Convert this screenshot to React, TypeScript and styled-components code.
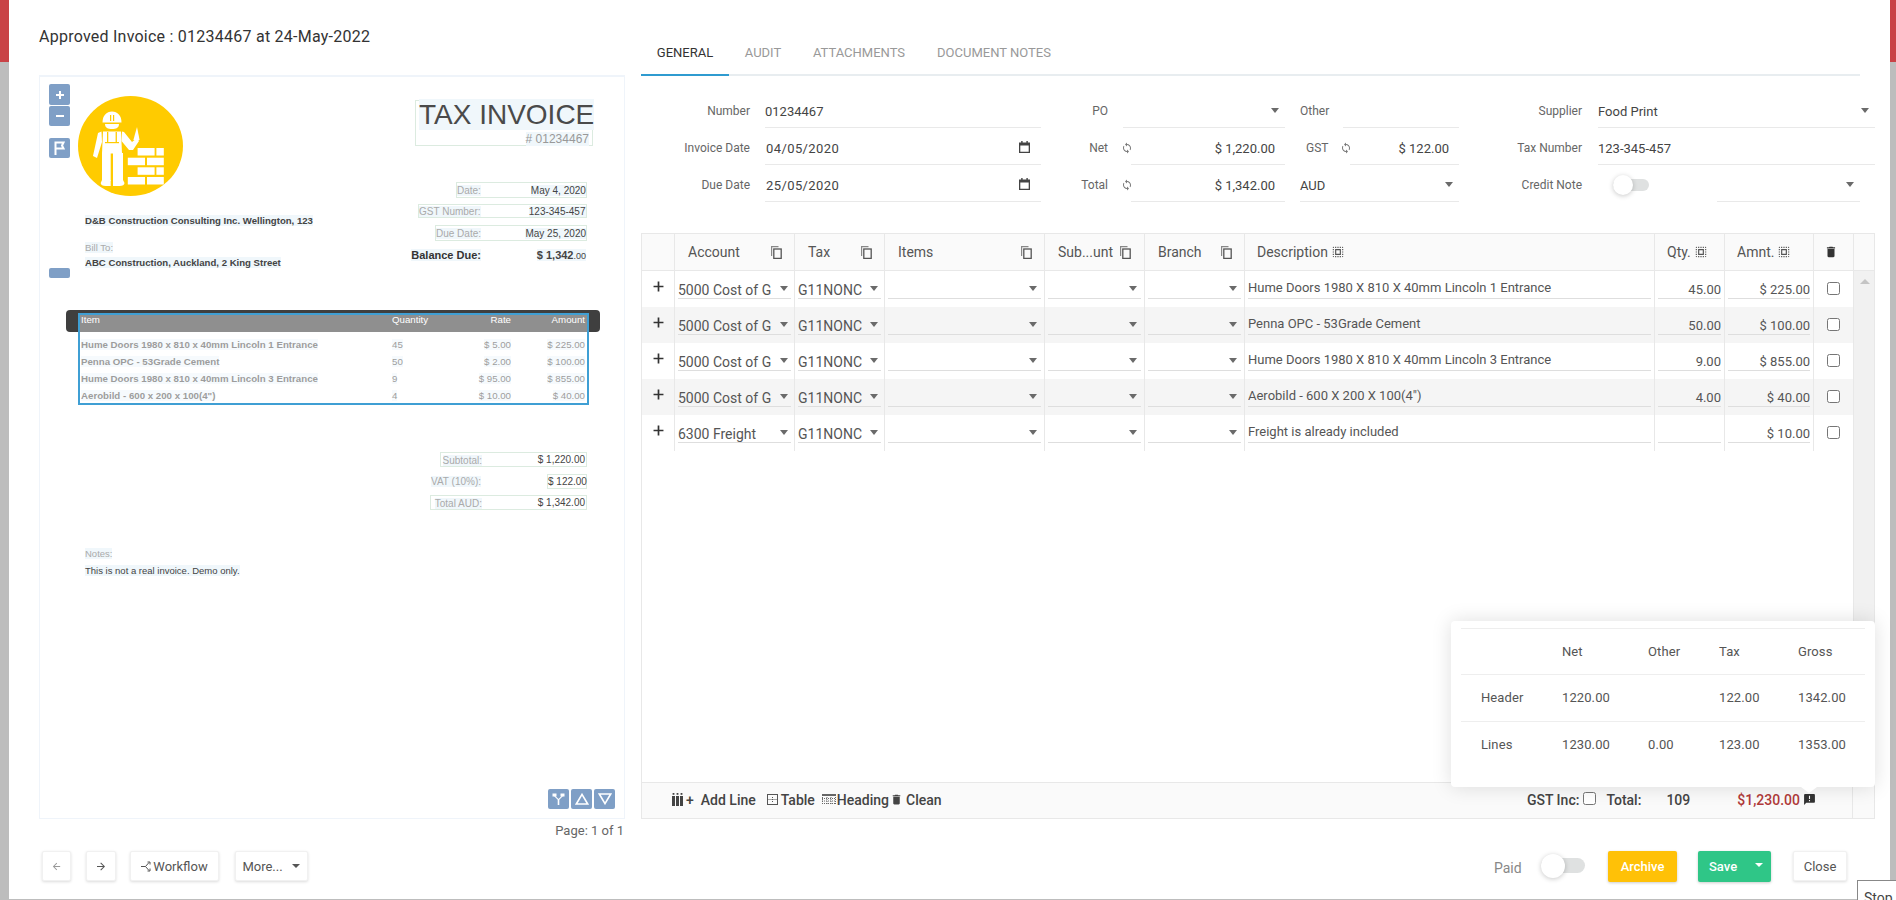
import { FC, ReactNode } from 'react'
import styled, { createGlobalStyle } from 'styled-components'

const GlobalStyle = createGlobalStyle`
	html, body {
		margin: 0;
		padding: 0;
		overflow: hidden;
	}
	body {
		font-family: Roboto, 'Liberation Sans', sans-serif;
		color: #555;
	}
	* {
		box-sizing: border-box;
	}
`

const PDF_FONT = `'Liberation Sans', Arial, sans-serif`
const COLUMNS = '33px 120px 90px 160px 100px 100px 410px 70px 89px 40px 20px'

const ICONS = {
	add: 'M19 13.2h-5.8V19h-2.4v-5.8H5v-2.4h5.8V5h2.4v5.8H19z',
	boldAdd: 'M20 14h-6v6h-4v-6H4v-4h6V4h4v6h6z',
	boldRemove: 'M20 14H4v-4h16z',
	back: 'M20 11H7.83l5.59-5.59L12 4l-8 8 8 8 1.41-1.41L7.83 13H20v-2z',
	forward: 'M12 4l-1.41 1.41L16.17 11H4v2h12.17l-5.58 5.59L12 20l8-8z',
	trash: 'M6 19c0 1.1.9 2 2 2h8c1.1 0 2-.9 2-2V7H6v12zM19 4h-3.5l-1-1h-5l-1 1H5v2h14V4z',
	note: 'M20 2H4c-1.1 0-1.99.9-1.99 2L2 22l4-4h14c1.1 0 2-.9 2-2V4c0-1.1-.9-2-2-2zm-7 9h-2V5h2v6zm0 4h-2v-2h2v2z',
	sync: 'M12 4V1L8 5l4 4V6c3.31 0 6 2.69 6 6 0 1.01-.25 1.97-.7 2.8l1.46 1.46C19.54 15.03 20 13.57 20 12c0-4.42-3.58-8-8-8zm0 14c-3.31 0-6-2.69-6-6 0-1.01.25-1.97.7-2.8L5.24 7.74C4.46 8.97 4 10.43 4 12c0 4.42 3.58 8 8 8v3l4-4-4-4v3z',
	selectAll:
		'M3 5h2V3c-1.1 0-2 .9-2 2zm0 8h2v-2H3v2zm4 8h2v-2H7v2zM3 9h2V7H3v2zm10-6h-2v2h2V3zm6 0v2h2c0-1.1-.9-2-2-2zM5 21v-2H3c0 1.1.9 2 2 2zm-2-4h2v-2H3v2zM9 3H7v2h2V3zm2 18h2v-2h-2v2zm8-8h2v-2h-2v2zm0 8c1.1 0 2-.9 2-2h-2v2zm0-12h2V7h-2v2zm0 8h2v-2h-2v2zm-4 4h2v-2h-2v2zm0-16h2V3h-2v2zM7 17h10V7H7v10zm2-8h6v6H9V9z',
}

const Icon: FC<{ name: keyof typeof ICONS; size: number; color?: string; className?: string }> = ({
	name,
	size,
	color,
	className,
}) => (
	<svg className={className} width={size} height={size} viewBox='0 0 24 24' fill={color ?? 'currentColor'}>
		<path d={ICONS[name]} />
	</svg>
)

const Page = styled.div`
	position: relative;
	width: 1896px;
	height: 900px;
	overflow: hidden;
	background: linear-gradient(#c94246 62px, #bdbdbd 62px);
`

const Modal = styled.div`
	display: flex;
	width: 1881px;
	height: 899px;
	margin-left: 9px;
	padding-left: 30px;
	background: #fff;
`

const LeftColumn = styled.div`
	width: 586px;
	margin-right: 16px;
	display: flex;
	flex-direction: column;
`

const RightColumn = styled.div`
	width: 1234px;
	padding-top: 32px;
	display: flex;
	flex-direction: column;
`

const Title = styled.h1`
	margin: 0;
	padding-top: 27px;
	height: 75px;
	font-size: 16px;
	line-height: 20px;
	font-weight: 400;
	color: #333;
	letter-spacing: 0.24px;
`

/* pdf viewer */
const Viewer = styled.div`
	position: relative;
	flex: none;
	height: 744px;
	border: 1px solid #eff4fa;
	border-top-width: 2px;
	font-family: ${PDF_FONT};
`

const ToolRail = styled.div`
	position: absolute;
	left: 9px;
	top: 7px;
	display: flex;
	flex-direction: column;
`

const ToolButton = styled.div<{ $h?: number; $mt?: number }>`
	width: 21px;
	height: ${({ $h }) => $h ?? 20}px;
	margin-top: ${({ $mt }) => $mt ?? 0}px;
	border-radius: 2px;
	background: #7f9fc6;
	color: #fff;
	display: flex;
	align-items: center;
	justify-content: center;
`

const PageTools = styled.div`
	position: absolute;
	right: 9px;
	bottom: 9px;
	display: flex;
	gap: 2px;
`

const Doc = styled.div`
	padding: 19px 37px 0 38px;
	font-size: 10px;
	color: #444;
`

const DocHead = styled.div`
	display: flex;
	justify-content: space-between;
	height: 195px;
`

const LogoMark = styled.svg`
	display: block;
	width: 105px;
	height: 100px;
	margin-bottom: 18px;
`

const AddressLine = styled.div<{ $muted?: boolean; $mt?: number }>`
	margin: ${({ $mt }) => $mt ?? 0}px 0 0 7px;
	line-height: 13px;
	font-size: 9.6px;
	font-weight: ${({ $muted }) => ($muted ? 400 : 700)};
	color: ${({ $muted }) => ($muted ? '#aaa' : '#444')};
`

const TextRun = styled.span`
	background: #f0f7fb;
`

const Meta = styled.div`
	display: flex;
	flex-direction: column;
	align-items: flex-end;
	padding-top: 4px;
`

const TaxBox = styled.div`
	width: 178px;
	height: 46px;
	border: 1px solid #dcebe0;
	padding: 0 3px;
	text-align: right;
	margin-right: -6px;
`

const TaxTitle = styled.div`
	font-size: 28px;
	line-height: 28px;
	text-align: left;
	white-space: nowrap;
	color: #4a4a4a;
`

const TaxNumber = styled.div`
	font-size: 12px;
	line-height: 14px;
	margin-top: 3px;
	color: #999;
`

const MetaRow = styled.div<{ $w: number; $h: number; $mt: number; $plain?: boolean }>`
	width: ${({ $w }) => $w}px;
	height: ${({ $h }) => $h}px;
	margin-top: ${({ $mt }) => $mt}px;
	display: grid;
	grid-template-columns: 1fr 105px;
	align-items: center;
	border: ${({ $plain }) => ($plain ? '0' : '1px solid #dcebe0')};
	padding-right: 1px;
`

const MetaLabel = styled.div<{ $strong?: boolean }>`
	text-align: right;
	font-size: ${({ $strong }) => ($strong ? 11 : 10)}px;
	font-weight: ${({ $strong }) => ($strong ? 700 : 400)};
	color: ${({ $strong }) => ($strong ? '#333' : '#aaa')};
	white-space: nowrap;
`

const MetaValue = styled.div<{ $strong?: boolean }>`
	text-align: right;
	font-size: ${({ $strong }) => ($strong ? 11 : 10)}px;
	font-weight: ${({ $strong }) => ($strong ? 700 : 400)};
	color: #444;
	white-space: nowrap;
	small {
		font-size: 9px;
		font-weight: 400;
	}
`

const LinesTable = styled.div`
	position: relative;
	width: 534px;
	margin: 19px 0 0 -12px;
	height: 95px;
`

const LinesHeader = styled.div`
	height: 22px;
	padding-top: 3px;
	border-radius: 4px;
	background: #3f3f3f;
	color: #fff;
`

const LineGrid = styled.div<{ $head?: boolean }>`
	display: grid;
	grid-template-columns: 311px 60px 59px 74px;
	padding-left: 15px;
	height: ${({ $head }) => ($head ? 14 : 17)}px;
	line-height: ${({ $head }) => ($head ? 14 : 17)}px;
	font-size: 9.7px;
`

const LineCell = styled.div<{ $right?: boolean; $bold?: boolean }>`
	text-align: ${({ $right }) => ($right ? 'right' : 'left')};
	font-weight: ${({ $bold }) => ($bold ? 700 : 400)};
	white-space: nowrap;
`

const LineRows = styled.div`
	padding-top: 4px;
	color: #555;
`

const SelectionBox = styled.div`
	position: absolute;
	left: 11.5px;
	top: 3px;
	width: 511px;
	height: 92px;
	border: 2px solid #3f9fd4;
	background: rgba(255, 255, 255, 0.42);
`

const TotalsBlock = styled.div`
	margin-top: 47px;
`

const TotalRow = styled.div<{ $left: number; $mt: number; $short?: boolean }>`
	width: ${({ $left }) => 587 - $left}px;
	margin: ${({ $mt }) => $mt}px 0 0 ${({ $left }) => $left - 78}px;
	height: 15px;
	display: grid;
	grid-template-columns: ${({ $left }) => 481 - $left}px 1fr;
	align-items: center;
	font-size: 10px;
	border: ${({ $short }) => ($short ? '0' : '1px solid #dcebe0')};
	padding-right: 1px;
`

const AmountBox = styled.div<{ $boxed?: boolean }>`
	justify-self: end;
	width: ${({ $boxed }) => ($boxed ? '40px' : 'auto')};
	height: 15px;
	line-height: 13px;
	text-align: right;
	white-space: nowrap;
	color: #444;
	border: ${({ $boxed }) => ($boxed ? '1px solid #dcebe0' : '0')};
	margin-right: ${({ $boxed }) => ($boxed ? '-1px' : '0')};
`

const Notes = styled.div`
	margin: 35px 0 0 7px;
	font-size: 9.5px;
	line-height: 17px;
`

const NotesLabel = styled.div`
	color: #aaa;
`

const PageLabel = styled.div`
	height: 32px;
	padding: 3px 1px 0 0;
	text-align: right;
	font-size: 13px;
	line-height: 18px;
	color: #666;
`

const Actions = styled.div`
	display: flex;
	align-items: flex-start;
`

const Button = styled.div<{ $w?: number; $ml?: number; $muted?: boolean }>`
	width: ${({ $w }) => ($w ? `${$w}px` : 'auto')};
	height: 30px;
	margin-left: ${({ $ml }) => $ml ?? 0}px;
	padding: 0 8px;
	display: flex;
	align-items: center;
	justify-content: center;
	gap: 2px;
	border: 1px solid #f1f1f1;
	border-radius: 2px;
	background: #fff;
	box-shadow: 0 1px 3px rgba(0, 0, 0, 0.14);
	font-size: 13px;
	color: ${({ $muted }) => ($muted ? '#999' : '#555')};
	white-space: nowrap;
`

const ColorButton = styled.div<{ $bg: string; $w: number; $ml: number }>`
	width: ${({ $w }) => $w}px;
	height: 31px;
	margin-left: ${({ $ml }) => $ml}px;
	border-radius: 2px;
	background: ${({ $bg }) => $bg};
	box-shadow: 0 1px 3px rgba(0, 0, 0, 0.2);
	color: #fff;
	font-size: 13px;
	font-weight: 500;
	display: flex;
	align-items: center;
	justify-content: center;
`

const SaveLabel = styled.span`
	flex: 1;
	padding-left: 11px;
`

const SaveCaret = styled.span`
	width: 0;
	height: 0;
	margin: 0 8px 3px 0;
	border-left: 4px solid transparent;
	border-right: 4px solid transparent;
	border-top: 4px solid #fff;
`

const Caret = styled.span`
	width: 0;
	height: 0;
	border-left: 4px solid transparent;
	border-right: 4px solid transparent;
	border-top: 4px solid #555;
	margin-left: 7px;
`

/* tabs */
const Tabs = styled.div`
	display: flex;
	flex: none;
	height: 44px;
	width: 1219px;
	border-bottom: 2px solid #e8edf0;
`

const Tab = styled.div<{ $active?: boolean; $w: number }>`
	width: ${({ $w }) => $w}px;
	height: 44px;
	padding-top: 13px;
	text-align: center;
	font-size: 13px;
	line-height: 16px;
	text-transform: uppercase;
	color: ${({ $active }) => ($active ? '#333' : '#999')};
	border-bottom: 2px solid ${({ $active }) => ($active ? '#2f9bd0' : 'transparent')};
`

/* header form */
const Form = styled.div`
	display: grid;
	flex: none;
	grid-template-columns: 400px 244px 174px 416px;
	grid-auto-rows: 37px;
	margin-top: 15px;
	height: 111px;
`

const Field = styled.div<{ $pl?: number }>`
	display: flex;
	padding-left: ${({ $pl }) => $pl ?? 0}px;
	font-size: 13px;
`

const FieldLabel = styled.div<{ $w?: number; $left?: boolean }>`
	width: ${({ $w }) => ($w ? `${$w}px` : 'auto')};
	padding-top: 12px;
	line-height: 16px;
	font-size: 12px;
	text-align: ${({ $left }) => ($left ? 'left' : 'right')};
	color: #666;
	white-space: nowrap;
`

const Input = styled.div<{ $ml: number; $w: number; $right?: boolean; $pr?: number }>`
	position: relative;
	width: ${({ $w }) => $w}px;
	height: 37px;
	margin-left: ${({ $ml }) => $ml}px;
	padding: 13px ${({ $pr }) => $pr ?? 0}px 0 0;
	line-height: 16px;
	font-size: 13px;
	color: #444;
	text-align: ${({ $right }) => ($right ? 'right' : 'left')};
	border-bottom: 1px solid #e9e9e9;
	display: flex;
	justify-content: ${({ $right }) => ($right ? 'flex-end' : 'space-between')};
`

const DateText = styled.span`
	padding-left: 1px;
	letter-spacing: 0.4px;
`

const Arrow = styled.span<{ $top?: number; $right?: number }>`
	position: absolute;
	top: ${({ $top }) => $top ?? 17}px;
	right: ${({ $right }) => $right ?? 6}px;
	width: 0;
	height: 0;
	border-left: 4px solid transparent;
	border-right: 4px solid transparent;
	border-top: 5px solid #6a6a6a;
`

const CalendarIcon = styled.svg`
	position: absolute;
	right: 11px;
	top: 13px;
	width: 11px;
	height: 12px;
`

const SyncIcon = styled(Icon)`
	position: absolute;
	left: -10px;
	top: 14px;
	color: #777;
`

const Switch = styled.div<{ $track: number; $height: number; $thumb: number }>`
	position: relative;
	width: ${({ $track }) => $track}px;
	height: ${({ $height }) => $height}px;
	border-radius: ${({ $height }) => $height / 2}px;
	background: #dfe1e1;
	&::before {
		content: '';
		position: absolute;
		left: 0;
		top: ${({ $height, $thumb }) => ($height - $thumb) / 2}px;
		width: ${({ $thumb }) => $thumb}px;
		height: ${({ $thumb }) => $thumb}px;
		border-radius: 50%;
		background: #fff;
		box-shadow: 0 1px 5px rgba(0, 0, 0, 0.22);
	}
`

const CreditSwitch = styled.div`
	margin: 14px 0 0 31px;
`

/* lines grid */
const Shell = styled.div`
	position: relative;
	display: flex;
	flex: none;
	flex-direction: column;
	width: 1234px;
	height: 586px;
	margin-top: 31px;
	border: 1px solid #e8e8e8;
`

const GridRow = styled.div<{ $shade?: boolean; $h: number }>`
	display: grid;
	grid-template-columns: ${COLUMNS};
	height: ${({ $h }) => $h}px;
	background: ${({ $shade }) => ($shade ? '#f5f5f5' : 'transparent')};
`

const HeadRow = styled(GridRow)`
	background: #fafafa;
	border-bottom: 1px solid #e8e8e8;
`

const HeadCell = styled.div<{ $pl?: number; $pr?: number; $tight?: boolean }>`
	display: flex;
	align-items: center;
	justify-content: ${({ $tight }) => ($tight ? 'flex-start' : 'space-between')};
	gap: 3px;
	padding: 0 ${({ $pr }) => $pr ?? 12}px 0 ${({ $pl }) => $pl ?? 13}px;
	border-right: 1px solid #e8e8e8;
	font-size: 14px;
	color: #555;
	white-space: nowrap;
`

const ScrollHead = styled.div``

const Body = styled.div`
	position: relative;
	flex: 1;
	min-height: 0;
`

const ScrollTrack = styled.div`
	position: absolute;
	top: 0;
	right: 0;
	bottom: 0;
	width: 21px;
	background: #f1f1f1;
	border-left: 1px solid #e8e8e8;
	&::before {
		content: '';
		position: absolute;
		left: 6px;
		top: 8px;
		border-left: 5px solid transparent;
		border-right: 5px solid transparent;
		border-bottom: 5px solid #c4c4c4;
	}
`

const Cell = styled.div<{ $center?: boolean }>`
	position: relative;
	padding: 0 3px;
	border-right: 1px solid #e8e8e8;
	display: ${({ $center }) => ($center ? 'flex' : 'block')};
	justify-content: center;
`

const PlusMark = styled(Icon)`
	margin-top: 7px;
`

const CellField = styled.div<{ $pt: number; $right?: boolean; $large?: boolean }>`
	position: relative;
	height: 28px;
	padding: ${({ $pt }) => $pt}px 0 0 0;
	border-bottom: 1px solid #dedede;
	font-size: ${({ $large }) => ($large ? 14 : 13)}px;
	line-height: 14px;
	color: #555;
	text-align: ${({ $right }) => ($right ? 'right' : 'left')};
	white-space: nowrap;
	overflow: hidden;
`

const CheckBox = styled.span`
	display: block;
	width: 13px;
	height: 13px;
	margin-top: 11px;
	border: 1px solid #767676;
	border-radius: 2.5px;
	background: #fff;
`

const Footer = styled.div`
	display: flex;
	flex: none;
	height: 36px;
	border-top: 1px solid #e8e8e8;
	background: #fafafa;
	font-size: 14px;
	font-weight: 500;
	color: #444;
`

const FooterMain = styled.div`
	flex: 1;
	display: flex;
	align-items: center;
	padding: 0 0 2px 30px;
	white-space: nowrap;
`

const FooterEnd = styled.div`
	width: 22px;
	border-left: 1px solid #e8e8e8;
`

const FooterItem = styled.span<{ $ml?: number; $gap?: number }>`
	display: inline-flex;
	align-items: center;
	gap: ${({ $gap }) => $gap ?? 3}px;
	margin-left: ${({ $ml }) => $ml ?? 0}px;
`

const TotalMoney = styled.span`
	margin-left: 47px;
	color: #b03a3a;
`

const FooterCheck = styled.span`
	width: 13px;
	height: 13px;
	margin: 0 10px 2px 4px;
	border: 1px solid #767676;
	border-radius: 2.5px;
	background: #fff;
`

const Spacer = styled.div`
	flex: 1;
`

/* totals popup */
const Popup = styled.div`
	position: absolute;
	right: -1px;
	bottom: -5px;
	width: 424px;
	height: 166px;
	padding: 7px 10px 0;
	border-radius: 4px;
	background: #fff;
	box-shadow: 0 0 20px rgba(0, 0, 0, 0.13);
	font-size: 13px;
	color: #555;
	&::after {
		content: '';
		position: absolute;
		left: 350px;
		bottom: -6px;
		border-left: 8px solid transparent;
		border-right: 8px solid transparent;
		border-top: 6px solid #fff;
	}
`

const PopupRow = styled.div<{ $h: number; $pb?: number }>`
	display: grid;
	grid-template-columns: 101px 86px 71px 79px 67px;
	align-items: center;
	height: ${({ $h }) => $h}px;
	padding-bottom: ${({ $pb }) => $pb ?? 0}px;
	border-top: 1px solid #eeeeee;
	letter-spacing: 0.1px;
`

const PopupCell = styled.div<{ $first?: boolean }>`
	padding-left: ${({ $first }) => ($first ? 20 : 0)}px;
`

const BottomRight = styled.div`
	display: flex;
	align-items: flex-start;
	margin-top: 32px;
	padding-left: 853px;
`

const PaidLabel = styled.div`
	width: 47px;
	padding-top: 8px;
	font-size: 14px;
	line-height: 18px;
	color: #888;
`

const PaidSwitch = styled.div`
	margin: 7px 0 0 0;
`

const StopTip = styled.div`
	position: absolute;
	right: 0;
	bottom: 0;
	width: 39px;
	height: 20px;
	padding: 9px 0 0 6px;
	border: 1px solid #888;
	border-width: 1px 0 0 1px;
	background: #fff;
	font-size: 14px;
	line-height: 16px;
	color: #444;
	overflow: hidden;
`

const FooterIcon = styled.svg`
	display: block;
`

const rows = [
	{ account: '5000 Cost of G', description: 'Hume Doors 1980 X 810 X 40mm Lincoln 1 Entrance', qty: '45.00', amount: '$ 225.00' },
	{ account: '5000 Cost of G', description: 'Penna OPC - 53Grade Cement', qty: '50.00', amount: '$ 100.00' },
	{ account: '5000 Cost of G', description: 'Hume Doors 1980 X 810 X 40mm Lincoln 3 Entrance', qty: '9.00', amount: '$ 855.00' },
	{ account: '5000 Cost of G', description: 'Aerobild - 600 X 200 X 100(4")', qty: '4.00', amount: '$ 40.00' },
	{ account: '6300 Freight', description: 'Freight is already included', qty: '', amount: '$ 10.00' },
]

const docLines = [
	['Hume Doors 1980 x 810 x 40mm Lincoln 1 Entrance', '45', '$ 5.00', '$ 225.00'],
	['Penna OPC - 53Grade Cement', '50', '$ 2.00', '$ 100.00'],
	['Hume Doors 1980 x 810 x 40mm Lincoln 3 Entrance', '9', '$ 95.00', '$ 855.00'],
	['Aerobild - 600 x 200 x 100(4")', '4', '$ 10.00', '$ 40.00'],
]

const CopyIcon: FC = () => (
	<svg width='11' height='13' viewBox='0 0 11 13' fill='none'>
		<path d='M0.6 10V0.6H7.5' stroke='#888' strokeWidth='1.2' />
		<rect x='2.8' y='3' width='7.4' height='9.4' stroke='#555' strokeWidth='1.3' />
	</svg>
)

const CalendarGlyph: FC = () => (
	<CalendarIcon viewBox='0 0 11 12'>
		<path d='M0 1.5h11V12H0z M1.3 4.5v6.2h8.4V4.5z' fill='#444' fillRule='evenodd' />
		<rect x='2.2' y='0' width='1.4' height='2' fill='#444' />
		<rect x='7.4' y='0' width='1.4' height='2' fill='#444' />
	</CalendarIcon>
)

const WorkerLogo: FC = () => (
	<LogoMark viewBox='0 0 105 100'>
		<ellipse cx='52.5' cy='50' rx='52.5' ry='50' fill='#ffcb00' />
		<g fill='#fff'>
			<path d='M24.5 26.5c0-7 4-11 9.5-11s9.5 4 9.5 11z' />
			<path d='M27 28h14c0 4-3 5-7 5s-7-1-7-5z' />
			<path d='M25 35.5h18l1 22H24z' />
			<path d='M23.5 35.5l-3.5 1.5-5 23 4 2 5-16z' />
			<path d='M44 35.5l2 .5 8 10 5-4 2 3-6 9h-4l-7.500-9z' />
			<path d='M24 57h8.700v28H24z' />
			<path d='M35 57h10v28H35z' />
			<path d='M24 84h8.700v6h-5c-3 0-5-1-5-3z' />
			<path d='M35 84h10l1.500 3c0 2-2 3-5 3H35z' />
			<path d='M59 31l2.600 13h-6.200z' />
			<rect x='59.6' y='52' width='17' height='7.5' />
			<rect x='78.4' y='52' width='7.4' height='7.5' />
			<rect x='49.8' y='61.7' width='17.2' height='7.5' />
			<rect x='69' y='61.7' width='16.8' height='7.5' />
			<rect x='59.6' y='71.3' width='17' height='7.5' />
			<rect x='78.4' y='71.3' width='7.4' height='7.5' />
			<rect x='49.8' y='81' width='17.2' height='7.5' />
			<rect x='69' y='81' width='16.8' height='7.5' />
		</g>
		<g fill='#ffcb00'>
			<rect x='29' y='36' width='1.3' height='10' />
			<rect x='37.6' y='36' width='1.3' height='10' />
			<rect x='27' y='46' width='14' height='1.2' />
			<rect x='32' y='19' width='1.2' height='6' />
			<rect x='35' y='19' width='1.2' height='6' />
		</g>
	</LogoMark>
)

const FlagGlyph: FC = () => (
	<svg width='11' height='14' viewBox='0 0 11 14' fill='none' stroke='#fff' strokeWidth='2'>
		<path d='M1.5 14V1.5h8L8 4.5l1.5 3h-8' />
	</svg>
)

const ForkGlyph: FC = () => (
	<svg width='13' height='13' viewBox='0 0 13 13' fill='#fff'>
		<rect x='0.5' y='0.5' width='4' height='3' />
		<rect x='8.5' y='0.5' width='4' height='3' />
		<path d='M2 3h1.4l3.1 3 3.1-3H11L7.3 6.8V12H5.7V6.8z' />
	</svg>
)

const TriangleGlyph: FC<{ down?: boolean }> = ({ down }) => (
	<svg width='14' height='12' viewBox='0 0 14 12' fill='none' stroke='#fff' strokeWidth='1.6'>
		<path d={down ? 'M1.3 1h11.4L7 10.6z' : 'M1.3 11h11.4L7 1.4z'} />
	</svg>
)

const WorkflowGlyph: FC = () => (
	<svg width='10' height='11' viewBox='0 0 10 11' fill='none' stroke='#555' strokeWidth='1'>
		<path d='M0 5.5h4.5L8 1.5 M4.5 5.5 8 9.5 M6.5 1h2.5v2.5 M6.5 10h2.5V7.5' />
	</svg>
)

const ColumnsGlyph: FC = () => (
	<FooterIcon width='11' height='13' viewBox='0 0 11 13' fill='#444'>
		<rect x='0' y='3' width='3' height='10' />
		<rect x='4' y='3' width='3' height='10' />
		<rect x='8' y='3' width='3' height='10' />
		<rect x='0.6' y='0' width='1.8' height='1.8' />
		<rect x='4.6' y='0' width='1.8' height='1.8' />
		<rect x='8.6' y='0' width='1.8' height='1.8' />
	</FooterIcon>
)

const TableGlyph: FC = () => (
	<FooterIcon width='11' height='11' viewBox='0 0 11 11' fill='none' stroke='#555' strokeWidth='1'>
		<rect x='0.5' y='0.5' width='10' height='10' />
		<path d='M0.5 5.5h10 M5.5 3v5' strokeDasharray='1 1' />
	</FooterIcon>
)

const HeadingGlyph: FC = () => (
	<FooterIcon width='14' height='11' viewBox='0 0 14 11' fill='none' stroke='#666' strokeWidth='1'>
		<path d='M0 1h14' strokeWidth='2' />
		<path d='M0.5 3v8 M13.5 3v8 M0 4.5h14 M0 7h14 M0 9.5h14 M5 3v8 M9 3v8' strokeDasharray='1 1' />
	</FooterIcon>
)

const Select: FC<{ label?: string; ml: number; w: number; right?: number }> = ({ label, ml, w, right }) => (
	<Input $ml={ml} $w={w}>
		<span>{label}</span>
		<Arrow $right={right ?? 6} />
	</Input>
)

const HeadCopy: FC<{ children: ReactNode; pl?: number; pr?: number }> = ({ children, pl, pr }) => (
	<HeadCell $pl={pl} $pr={pr}>
		<span>{children}</span>
		<CopyIcon />
	</HeadCell>
)

const HeadSelect: FC<{ children: ReactNode }> = ({ children }) => (
	<HeadCell $tight $pl={12}>
		<span>{children}</span>
		<Icon name='selectAll' size={14} color='#555' />
	</HeadCell>
)

const CellSelect: FC<{ label?: string; arrow?: number }> = ({ label, arrow }) => (
	<Cell>
		<CellField $pt={12} $large>
			{label || '\u00a0'}
			<Arrow $top={15} $right={arrow ?? 4} />
		</CellField>
	</Cell>
)

const App: FC = () => (
	<Page>
		<GlobalStyle />
		<Modal>
			<LeftColumn>
				<Title>Approved Invoice : 01234467 at 24-May-2022</Title>
				<Viewer>
					<Doc>
						<DocHead>
							<div>
								<WorkerLogo />
								<AddressLine>
									<TextRun>D&amp;B Construction Consulting Inc. Wellington, 123</TextRun>
								</AddressLine>
								<AddressLine $muted $mt={14}>
									<TextRun>Bill To:</TextRun>
								</AddressLine>
								<AddressLine $mt={2}>
									<TextRun>ABC Construction, Auckland, 2 King Street</TextRun>
								</AddressLine>
							</div>
							<Meta>
								<TaxBox>
									<TaxTitle>
										<TextRun>TAX INVOICE</TextRun>
									</TaxTitle>
									<TaxNumber>
										<TextRun># 01234467</TextRun>
									</TaxNumber>
								</TaxBox>
								<MetaRow $w={131} $h={16} $mt={36}>
									<MetaLabel><TextRun>Date:</TextRun></MetaLabel>
									<MetaValue><TextRun>May 4, 2020</TextRun></MetaValue>
								</MetaRow>
								<MetaRow $w={169} $h={14} $mt={6}>
									<MetaLabel><TextRun>GST Number:</TextRun></MetaLabel>
									<MetaValue><TextRun>123-345-457</TextRun></MetaValue>
								</MetaRow>
								<MetaRow $w={152} $h={16} $mt={7}>
									<MetaLabel><TextRun>Due Date:</TextRun></MetaLabel>
									<MetaValue><TextRun>May 25, 2020</TextRun></MetaValue>
								</MetaRow>
								<MetaRow $plain $w={180} $h={14} $mt={7}>
									<MetaLabel $strong><TextRun>Balance Due:</TextRun></MetaLabel>
									<MetaValue $strong><TextRun>$ 1,342<small>.00</small></TextRun></MetaValue>
								</MetaRow>
							</Meta>
						</DocHead>
						<LinesTable>
							<LinesHeader>
								<LineGrid $head>
									<LineCell>Item</LineCell>
									<LineCell>Quantity</LineCell>
									<LineCell $right>Rate</LineCell>
									<LineCell $right>Amount</LineCell>
								</LineGrid>
							</LinesHeader>
							<LineRows>
								{docLines.map((line) => (
									<LineGrid key={line[0]}>
										<LineCell $bold><TextRun>{line[0]}</TextRun></LineCell>
										<LineCell><TextRun>{line[1]}</TextRun></LineCell>
										<LineCell $right><TextRun>{line[2]}</TextRun></LineCell>
										<LineCell $right><TextRun>{line[3]}</TextRun></LineCell>
									</LineGrid>
								))}
							</LineRows>
							<SelectionBox />
						</LinesTable>
						<TotalsBlock>
							<TotalRow $left={440} $mt={0}>
								<MetaLabel><TextRun>Subtotal:</TextRun></MetaLabel>
								<AmountBox>$ 1,220.00</AmountBox>
							</TotalRow>
							<TotalRow $short $left={430} $mt={7}>
								<MetaLabel><TextRun>VAT (10%):</TextRun></MetaLabel>
								<AmountBox $boxed>$ 122.00</AmountBox>
							</TotalRow>
							<TotalRow $left={430} $mt={6}>
								<MetaLabel><TextRun>Total AUD:</TextRun></MetaLabel>
								<AmountBox>$ 1,342.00</AmountBox>
							</TotalRow>
						</TotalsBlock>
						<Notes>
							<NotesLabel><TextRun>Notes:</TextRun></NotesLabel>
							<div><TextRun>This is not a real invoice. Demo only.</TextRun></div>
						</Notes>
					</Doc>
					<ToolRail>
						<ToolButton $h={21}><Icon name='boldAdd' size={12} /></ToolButton>
						<ToolButton $mt={1}><Icon name='boldRemove' size={12} /></ToolButton>
						<ToolButton $mt={12}><FlagGlyph /></ToolButton>
						<ToolButton $mt={110} $h={10} />
					</ToolRail>
					<PageTools>
						<ToolButton><ForkGlyph /></ToolButton>
						<ToolButton><TriangleGlyph /></ToolButton>
						<ToolButton><TriangleGlyph down /></ToolButton>
					</PageTools>
				</Viewer>
				<PageLabel>Page: 1 of 1</PageLabel>
				<Actions>
					<Button $w={29} $ml={3} $muted><Icon name='back' size={13} /></Button>
					<Button $w={30} $ml={15}><Icon name='forward' size={13} /></Button>
					<Button $w={89} $ml={14}><WorkflowGlyph />Workflow</Button>
					<Button $w={73} $ml={15.5}>More...<Caret /></Button>
				</Actions>
			</LeftColumn>
			<RightColumn>
				<Tabs>
					<Tab $active $w={88}>General</Tab>
					<Tab $w={68}>Audit</Tab>
					<Tab $w={124}>Attachments</Tab>
					<Tab $w={146}>Document Notes</Tab>
				</Tabs>
				<Form>
					<Field>
						<FieldLabel $w={109}>Number</FieldLabel>
						<Input $ml={15} $w={276}>01234467</Input>
					</Field>
					<Field>
						<FieldLabel $w={67}>PO</FieldLabel>
						<Select ml={15} w={162} right={6} />
					</Field>
					<Field $pl={15}>
						<FieldLabel $left>Other</FieldLabel>
						<Input $ml={14} $w={116} />
					</Field>
					<Field>
						<FieldLabel $w={123}>Supplier</FieldLabel>
						<Select label='Food Print' ml={16} w={277} right={6} />
					</Field>

					<Field>
						<FieldLabel $w={109}>Invoice Date</FieldLabel>
						<Input $ml={15} $w={276}>
							<DateText>04/05/2020</DateText>
							<CalendarGlyph />
						</Input>
					</Field>
					<Field>
						<FieldLabel $w={67}>Net</FieldLabel>
						<Input $ml={23} $w={154} $right $pr={10}>
							<SyncIcon name='sync' size={12} />$ 1,220.00
						</Input>
					</Field>
					<Field $pl={21}>
						<FieldLabel $left>GST</FieldLabel>
						<Input $ml={22} $w={109} $right $pr={10}>
							<SyncIcon name='sync' size={12} />$ 122.00
						</Input>
					</Field>
					<Field>
						<FieldLabel $w={123}>Tax Number</FieldLabel>
						<Input $ml={16} $w={277}>123-345-457</Input>
					</Field>

					<Field>
						<FieldLabel $w={109}>Due Date</FieldLabel>
						<Input $ml={15} $w={276}>
							<DateText>25/05/2020</DateText>
							<CalendarGlyph />
						</Input>
					</Field>
					<Field>
						<FieldLabel $w={67}>Total</FieldLabel>
						<Input $ml={23} $w={154} $right $pr={10}>
							<SyncIcon name='sync' size={12} />$ 1,342.00
						</Input>
					</Field>
					<Field $pl={15}>
						<Select label='AUD' ml={0} w={159} right={6} />
					</Field>
					<Field>
						<FieldLabel $w={123}>Credit Note</FieldLabel>
						<CreditSwitch>
							<Switch $track={36} $height={12} $thumb={20} />
						</CreditSwitch>
						<Select ml={68} w={143} right={6} />
					</Field>
				</Form>
				<Shell>
					<HeadRow $h={37}>
						<HeadCell />
						<HeadCopy>Account</HeadCopy>
						<HeadCopy>Tax</HeadCopy>
						<HeadCopy>Items</HeadCopy>
						<HeadCopy pr={13}>Sub...unt</HeadCopy>
						<HeadCopy>Branch</HeadCopy>
						<HeadSelect>Description</HeadSelect>
						<HeadSelect>Qty.</HeadSelect>
						<HeadSelect>Amnt.</HeadSelect>
						<HeadCell $pl={10}>
							<Icon name='trash' size={14} color='#333' />
						</HeadCell>
						<ScrollHead />
					</HeadRow>
					<Body>
						<ScrollTrack />
						{rows.map((row, index) => (
							<GridRow key={index} $h={36} $shade={index % 2 === 1}>
								<Cell $center><PlusMark name='add' size={17} color='#333' /></Cell>
								<CellSelect label={row.account} arrow={3} />
								<CellSelect label='G11NONC' arrow={3} />
								<CellSelect />
								<CellSelect />
								<CellSelect />
								<Cell>
									<CellField $pt={10}>{row.description}</CellField>
								</Cell>
								<Cell>
									<CellField $pt={12} $right>{row.qty || '\u00a0'}</CellField>
								</Cell>
								<Cell>
									<CellField $pt={12} $right>{row.amount}</CellField>
								</Cell>
								<Cell $center><CheckBox /></Cell>
							</GridRow>
						))}
						<Popup>
							<PopupRow $h={46}>
								<PopupCell $first />
								<PopupCell>Net</PopupCell>
								<PopupCell>Other</PopupCell>
								<PopupCell>Tax</PopupCell>
								<PopupCell>Gross</PopupCell>
							</PopupRow>
							<PopupRow $h={47} $pb={2}>
								<PopupCell $first>Header</PopupCell>
								<PopupCell>1220.00</PopupCell>
								<PopupCell />
								<PopupCell>122.00</PopupCell>
								<PopupCell>1342.00</PopupCell>
							</PopupRow>
							<PopupRow $h={47} $pb={2}>
								<PopupCell $first>Lines</PopupCell>
								<PopupCell>1230.00</PopupCell>
								<PopupCell>0.00</PopupCell>
								<PopupCell>123.00</PopupCell>
								<PopupCell>1353.00</PopupCell>
							</PopupRow>
						</Popup>
					</Body>
					<Footer>
						<FooterMain>
							<ColumnsGlyph />
							<FooterItem $ml={3} $gap={7}>+<span>Add Line</span></FooterItem>
							<FooterItem $ml={11}><TableGlyph />Table</FooterItem>
							<FooterItem $ml={7} $gap={1}><HeadingGlyph />Heading</FooterItem>
							<FooterItem $ml={1}><Icon name='trash' size={13} />Clean</FooterItem>
							<Spacer />
							<span>GST Inc:</span>
							<FooterCheck />
							<span>Total:</span>
							<FooterItem $ml={25}>109</FooterItem>
							<TotalMoney>$1,230.00</TotalMoney>
							<FooterItem $ml={3}><Icon name='note' size={13} color='#333' /></FooterItem>
							<FooterItem $ml={36} />
						</FooterMain>
						<FooterEnd />
					</Footer>
				</Shell>
				<BottomRight>
					<PaidLabel>Paid</PaidLabel>
					<PaidSwitch>
						<Switch $track={44} $height={15} $thumb={24} />
					</PaidSwitch>
					<ColorButton $bg='#ffc107' $w={69} $ml={23}>Archive</ColorButton>
					<ColorButton $bg='#2fc687' $w={73} $ml={21}>
						<SaveLabel>Save</SaveLabel>
						<SaveCaret />
					</ColorButton>
					<Button $w={54} $ml={22}>Close</Button>
				</BottomRight>
			</RightColumn>
		</Modal>
		<StopTip>Stop</StopTip>
	</Page>
)

export default App
